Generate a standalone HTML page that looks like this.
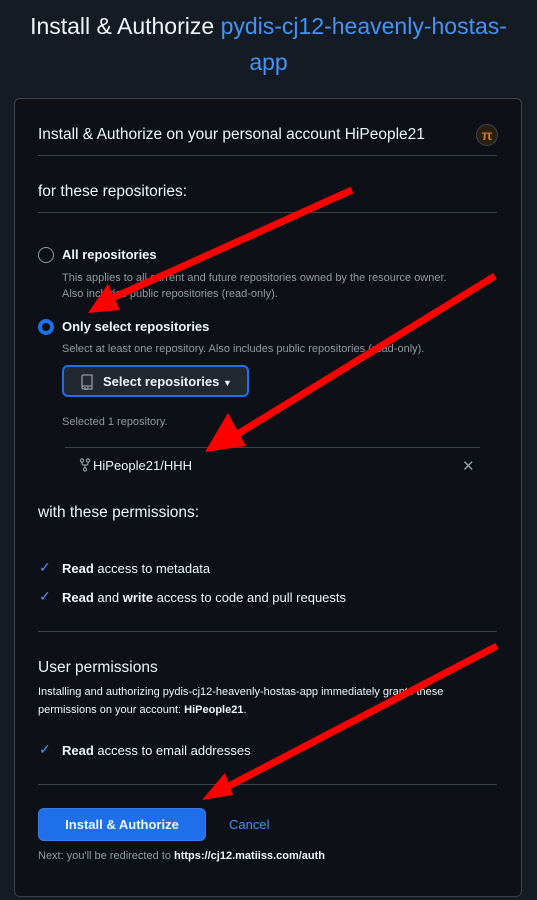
<!DOCTYPE html>
<html><head><meta charset="utf-8"><style>
*{margin:0;padding:0;box-sizing:border-box}
body{width:537px;height:900px;background:#151b23;font-family:"Liberation Sans",sans-serif;color:#f0f6fc;position:relative;overflow:hidden}
.a{position:absolute;white-space:nowrap}
.card{position:absolute;left:14px;top:98px;width:508px;height:799px;background:#0d1117;border:1px solid #3d444d;border-radius:6px}
.hr{position:absolute;height:1px;background:#3d444d}
.m{color:#9198a1;font-size:12px}
.b{font-weight:bold}
.chk{color:#4493f8;font-size:14px}
</style></head><body>
<div class="a" style="left:0;width:537px;text-align:center;top:8px;font-size:23px;line-height:36px;white-space:normal">Install &amp; Authorize <span style="color:#4493f8">pydis-cj12-heavenly-hostas-<br>app</span></div>
<div class="card"></div>
<div class="a" style="left:38px;top:126px;font-size:15.5px">Install &amp; Authorize on your personal account HiPeople21</div>
<div class="a" style="left:476px;top:124px;width:22px;height:22px;border-radius:50%;background:#2a1e10;border:1px solid #3d444d;color:#c07a2a;font-size:14px;text-align:center;line-height:20px;font-weight:bold">π</div>
<div class="hr" style="left:38px;top:155px;width:459px"></div>
<div class="a" style="left:38px;top:183px;font-size:15.5px">for these repositories:</div>
<div class="hr" style="left:38px;top:212px;width:459px"></div>
<div class="a" style="left:38px;top:247px;width:16px;height:16px;border-radius:50%;border:1px solid #9198a1"></div>
<div class="a b" style="left:62px;top:247px;font-size:13px">All repositories</div>
<div class="a m" style="left:62px;top:270px;font-size:11px;line-height:16px">This applies to all current and future repositories owned by the resource owner.<br>Also includes public repositories (read-only).</div>
<div class="a" style="left:38px;top:319px;width:16px;height:16px;border-radius:50%;border:4px solid #1f6feb;background:#0d1117"></div>
<div class="a b" style="left:62px;top:319px;font-size:13px">Only select repositories</div>
<div class="a m" style="left:62px;top:343px;font-size:11px">Select at least one repository. Also includes public repositories (read-only).</div>
<div class="a" style="left:62px;top:365px;width:187px;height:32px;border:2px solid #1f6feb;border-radius:6px;background:#212830"></div>
<svg class="a" style="left:80px;top:374px" width="14" height="16" viewBox="0 0 14 16"><path d="M2 2.5A1.5 1.5 0 0 1 3.5 1H12v11H3.5A1.5 1.5 0 0 0 2 13.5zM2 13.5A1.5 1.5 0 0 0 3.5 15H5M9 15h3v-3M5 13v3l1.5-1 1.5 1v-3" fill="none" stroke="#9198a1" stroke-width="1.3"/></svg>
<div class="a b" style="left:103px;top:374px;font-size:13px">Select repositories <span style="font-size:9px">▼</span></div>
<div class="a m" style="left:62px;top:416px;font-size:11px">Selected 1 repository.</div>
<div class="hr" style="left:65px;top:447px;width:415px"></div>
<svg class="a" style="left:79px;top:458px" width="12" height="14" viewBox="0 0 12 14"><circle cx="3" cy="2.5" r="1.6" fill="none" stroke="#9198a1" stroke-width="1.2"/><circle cx="9" cy="2.5" r="1.6" fill="none" stroke="#9198a1" stroke-width="1.2"/><circle cx="6" cy="11.5" r="1.6" fill="none" stroke="#9198a1" stroke-width="1.2"/><path d="M3 4v1.5a1.5 1.5 0 0 0 1.5 1.5h3A1.5 1.5 0 0 0 9 5.5V4M6 7v3" fill="none" stroke="#9198a1" stroke-width="1.2"/></svg>
<div class="a" style="left:93px;top:458px;font-size:13px">HiPeople21/HHH</div>
<div class="a" style="left:462px;top:457px;font-size:15px;color:#9198a1">✕</div>
<div class="a" style="left:38px;top:504px;font-size:15.5px">with these permissions:</div>
<div class="a chk" style="left:39px;top:559px">✓</div>
<div class="a" style="left:62px;top:561px;font-size:13px"><b>Read</b> access to metadata</div>
<div class="a chk" style="left:39px;top:588px">✓</div>
<div class="a" style="left:62px;top:590px;font-size:13px"><b>Read</b> and <b>write</b> access to code and pull requests</div>
<div class="hr" style="left:38px;top:631px;width:459px"></div>
<div class="a" style="left:38px;top:659px;font-size:15.5px">User permissions</div>
<div class="a" style="left:38px;top:683px;font-size:11px;line-height:18px">Installing and authorizing pydis-cj12-heavenly-hostas-app immediately grants these<br>permissions on your account: <b>HiPeople21</b>.</div>
<div class="a chk" style="left:39px;top:741px">✓</div>
<div class="a" style="left:62px;top:743px;font-size:13px"><b>Read</b> access to email addresses</div>
<div class="hr" style="left:38px;top:784px;width:459px"></div>
<div class="a b" style="left:38px;top:808px;width:168px;height:33px;background:#1f6feb;border:1px solid #3b7de8;border-radius:6px;font-size:13px;text-align:center;line-height:31px">Install &amp; Authorize</div>
<div class="a" style="left:229px;top:817px;font-size:13px;color:#4493f8">Cancel</div>
<div class="a m" style="left:38px;top:850px;font-size:11px">Next: you'll be redirected to <b style="color:#f0f6fc">https://cj12.matiiss.com/auth</b></div>
<svg class="a" style="left:0;top:0" width="537" height="900">
<g stroke="#ff0000" stroke-width="7" fill="#ff0000">
<line x1="352" y1="190" x2="108" y2="300"/>
<line x1="495" y1="276" x2="228" y2="440"/>
<line x1="497" y1="646" x2="225" y2="788"/>
</g>
<g fill="#ff0000">
<polygon points="88,313 108,284 120,310"/>
<polygon points="205,452 228,413 246,446"/>
<polygon points="202,800 225,773 233,795"/>
</g>
</svg>
</body></html>
